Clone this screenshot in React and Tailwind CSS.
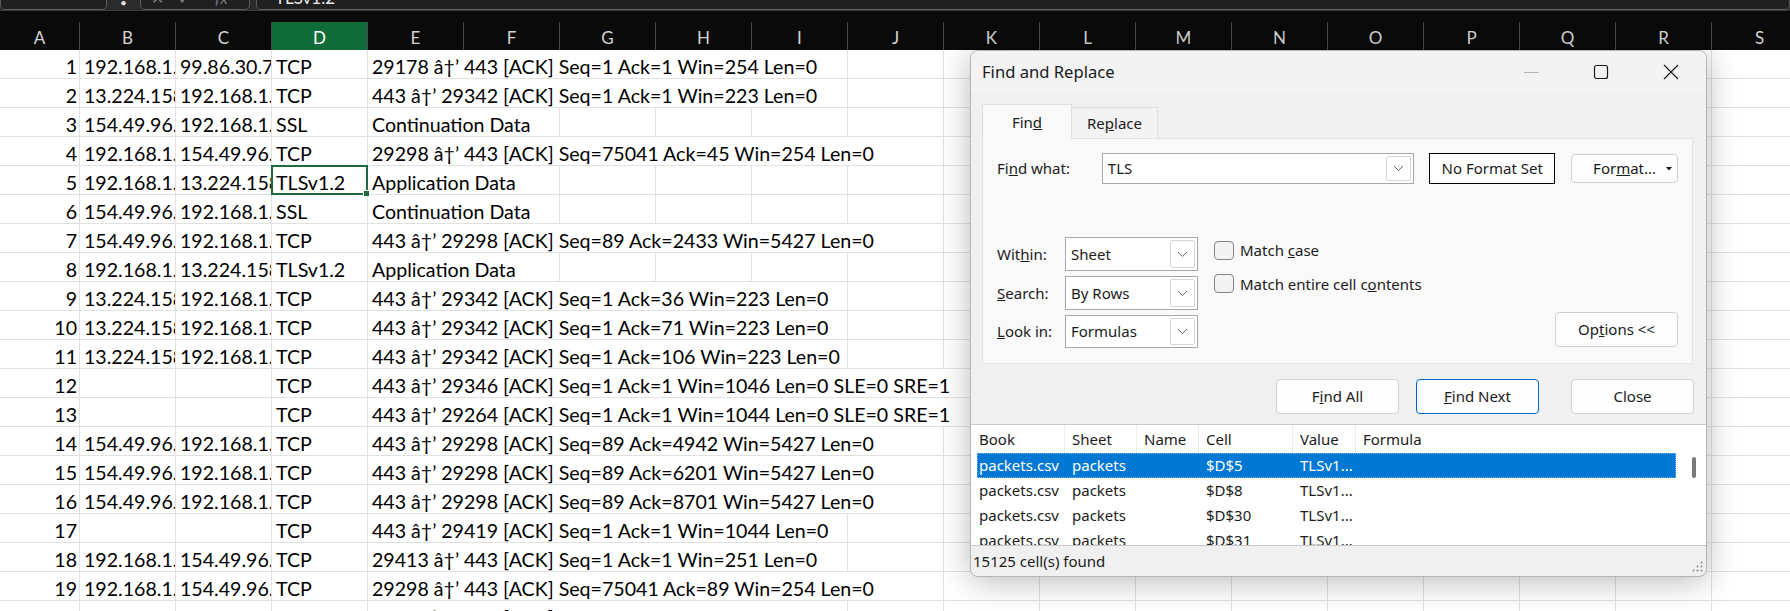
import clsx from 'clsx';

const COLS = ['A', 'B', 'C', 'D', 'E', 'F', 'G', 'H', 'I', 'J', 'K', 'L', 'M', 'N', 'O', 'P', 'Q', 'R', 'S', 'T'];

const ROWS = [
  ['1', '192.168.1.', '99.86.30.7', 'TCP', '29178 â†’ 443 [ACK] Seq=1 Ack=1 Win=254 Len=0', 5],
  ['2', '13.224.158', '192.168.1.', 'TCP', '443 â†’ 29342 [ACK] Seq=1 Ack=1 Win=223 Len=0', 5],
  ['3', '154.49.96.', '192.168.1.', 'SSL', 'Continuation Data', 2],
  ['4', '192.168.1.', '154.49.96.', 'TCP', '29298 â†’ 443 [ACK] Seq=75041 Ack=45 Win=254 Len=0', 6],
  ['5', '192.168.1.', '13.224.158', 'TLSv1.2', 'Application Data', 2],
  ['6', '154.49.96.', '192.168.1.', 'SSL', 'Continuation Data', 2],
  ['7', '154.49.96.', '192.168.1.', 'TCP', '443 â†’ 29298 [ACK] Seq=89 Ack=2433 Win=5427 Len=0', 6],
  ['8', '192.168.1.', '13.224.158', 'TLSv1.2', 'Application Data', 2],
  ['9', '13.224.158', '192.168.1.', 'TCP', '443 â†’ 29342 [ACK] Seq=1 Ack=36 Win=223 Len=0', 5],
  ['10', '13.224.158', '192.168.1.', 'TCP', '443 â†’ 29342 [ACK] Seq=1 Ack=71 Win=223 Len=0', 5],
  ['11', '13.224.158', '192.168.1.', 'TCP', '443 â†’ 29342 [ACK] Seq=1 Ack=106 Win=223 Len=0', 5],
  ['12', '', '', 'TCP', '443 â†’ 29346 [ACK] Seq=1 Ack=1 Win=1046 Len=0 SLE=0 SRE=1', 7],
  ['13', '', '', 'TCP', '443 â†’ 29264 [ACK] Seq=1 Ack=1 Win=1044 Len=0 SLE=0 SRE=1', 7],
  ['14', '154.49.96.', '192.168.1.', 'TCP', '443 â†’ 29298 [ACK] Seq=89 Ack=4942 Win=5427 Len=0', 6],
  ['15', '154.49.96.', '192.168.1.', 'TCP', '443 â†’ 29298 [ACK] Seq=89 Ack=6201 Win=5427 Len=0', 6],
  ['16', '154.49.96.', '192.168.1.', 'TCP', '443 â†’ 29298 [ACK] Seq=89 Ack=8701 Win=5427 Len=0', 6],
  ['17', '', '', 'TCP', '443 â†’ 29419 [ACK] Seq=1 Ack=1 Win=1044 Len=0', 5],
  ['18', '192.168.1.', '154.49.96.', 'TCP', '29413 â†’ 443 [ACK] Seq=1 Ack=1 Win=251 Len=0', 5],
  ['19', '192.168.1.', '154.49.96.', 'TCP', '29298 â†’ 443 [ACK] Seq=75041 Ack=89 Win=254 Len=0', 6],
  ['20', '13.224.158', '192.168.1.', 'TCP', '443 â†’ 29342 [ACK] Seq=1 Ack=141 Win=223 Len=0', 5],
];

const SPAN_W = { 2: 'w-[192px]', 5: 'w-[480px]', 6: 'w-[576px]', 7: 'w-[672px]' };

const RESULTS = [
  ['packets.csv', 'packets', '$D$5', 'TLSv1...'],
  ['packets.csv', 'packets', '$D$8', 'TLSv1...'],
  ['packets.csv', 'packets', '$D$30', 'TLSv1...'],
  ['packets.csv', 'packets', '$D$31', 'TLSv1...'],
];

const cellBase = 'flex h-full shrink-0 items-end overflow-hidden whitespace-nowrap border-r border-[#e1e1e1] leading-[23px]';

function Chevron() {
  return (
    <svg width="11" height="7" viewBox="0 0 11 7" fill="none">
      <polyline points="1,1 5.5,5.5 10,1" stroke="#6a6a6a" strokeWidth="1" />
    </svg>
  );
}

function Combo({ value, className }) {
  return (
    <div className={clsx('flex items-center border border-[#a8a8a8] bg-white p-[2px]', className)}>
      <span className="flex-1 pl-[3px]">{value}</span>
      <div className="flex h-full w-[25px] items-center justify-center rounded-[2px] border border-[#d6d6d6] bg-white">
        <Chevron />
      </div>
    </div>
  );
}

function Btn({ children, className }) {
  return (
    <div className={clsx('flex h-[35px] w-[123px] items-center justify-center rounded-[4px] border bg-[#fdfdfd]', className)}>
      {children}
    </div>
  );
}

function Checkbox({ label }) {
  return (
    <div className="flex items-center gap-[6px]">
      <div className="h-[19px] w-[20px] rounded-[4px] border border-[#858585] bg-[#f3f3f3]" />
      <span>{label}</span>
    </div>
  );
}

function Sheet() {
  return (
    <div className="font-['Lato',sans-serif]">
      {/* top strip with name box / formula bar, mostly scrolled off */}
      <div className="flex h-[11px] items-end overflow-hidden border-b border-[#3c3c3c] bg-[#2b2b2b]">
        <div className="h-[30px] w-[107px] shrink-0 rounded-[5px] border border-[#5c5c5c] bg-[#202020]" />
        <div className="flex w-[33px] shrink-0 justify-center self-start text-[12px] leading-[6px] text-[#e0e0e0]">•</div>
        <div className="flex h-[30px] w-[110px] shrink-0 items-end gap-[14px] rounded-[5px] border border-[#5c5c5c] bg-[#202020] pb-[3px] pl-[10px] text-[16px] leading-[16px] text-[#7a7a7a]">
          <span>✕</span>
          <span>✓</span>
          <span className="ml-[10px] italic">fx</span>
        </div>
        <div className="ml-[6px] flex h-[30px] flex-1 items-end rounded-[5px] border border-[#5c5c5c] bg-[#202020] pb-[3px] pl-[18px] text-[17px] leading-[16px] text-[#e8e8e8]">
          TLSv1.2
        </div>
      </div>

      {/* column headers */}
      <div className="flex h-[39px] items-end bg-[#0a0a0a]">
        {COLS.map((c, i) => (
          <div
            key={c}
            className={clsx(
              'flex h-[28px] shrink-0 items-center justify-center border-r border-[#4a4a4a] pt-[3px] text-[17px]',
              i === 0 ? 'w-[80px]' : 'w-[96px]',
              c === 'D' ? 'bg-[#0f6b38] text-white' : 'text-[#d4d4d4]'
            )}
          >
            {c}
          </div>
        ))}
      </div>

      {/* rows */}
      <div className="text-[19.6px] text-black">
        {ROWS.map(([a, b, c, d, e, span]) => (
          <div key={a} className="flex h-[29px] border-b border-[#e1e1e1]">
            <div className={clsx(cellBase, 'w-[80px] justify-end pr-[2px]')}>{a}</div>
            <div className={clsx(cellBase, 'w-[96px] pl-[4px]')}>{b}</div>
            <div className={clsx(cellBase, 'w-[96px] pl-[4px]')}>{c}</div>
            <div className={clsx(cellBase, 'relative w-[96px] overflow-visible pl-[4px]')}>
              {d}
              {a === '5' && (
                <div className="absolute -bottom-px -left-px -right-px -top-px z-10 border-2 border-[#1e6b3f]">
                  <div className="absolute -bottom-[4px] -right-[4px] h-[7px] w-[7px] border border-white bg-[#1e6b3f]" />
                </div>
              )}
            </div>
            <div className={clsx(cellBase, SPAN_W[span], 'pl-[4px]')}>{e}</div>
            {Array.from({ length: 16 - span }).map((_, i) => (
              <div key={i} className={clsx(cellBase, 'w-[96px]')} />
            ))}
          </div>
        ))}
      </div>
    </div>
  );
}

function FindDialog() {
  return (
    <div className="absolute left-[970px] top-[50px] flex h-[527px] w-[737px] flex-col overflow-hidden rounded-[8px] border border-[#b4b4b4] bg-[#f0f0f0] font-['Noto_Sans',sans-serif] text-[15px] text-[#1b1b1b] shadow-[0_4px_32px_rgba(0,0,0,0.28)]">
      {/* title bar */}
      <div className="flex h-[42px] shrink-0 items-center justify-between bg-[#f3f3f3] pl-[11px]">
        <span className="text-[16.6px]">Find and Replace</span>
        <div className="flex h-full">
          <div className="flex w-[70px] items-center justify-center">
            <div className="h-px w-[15px] bg-[#b5b5b5]" />
          </div>
          <div className="flex w-[70px] items-center justify-center">
            <svg width="16" height="16" viewBox="0 0 16 16" fill="none">
              <rect x="1.5" y="1.5" width="13" height="13" rx="2" stroke="#1a1a1a" strokeWidth="1.2" />
            </svg>
          </div>
          <div className="flex w-[70px] items-center justify-center">
            <svg width="16" height="16" viewBox="0 0 16 16" fill="none">
              <path d="M1 1 L15 15 M15 1 L1 15" stroke="#1a1a1a" strokeWidth="1.2" />
            </svg>
          </div>
        </div>
      </div>

      {/* tabs */}
      <div className="flex h-[45px] shrink-0 items-end pl-[11px] pt-[11px]">
        <div className="relative z-10 -mb-px flex h-[35px] w-[90px] items-center justify-center border border-b-0 border-[#e0e0e0] bg-[#f9f9f9]">
          <span>Fin<span className="underline">d</span></span>
        </div>
        <div className="flex h-[31px] w-[86px] items-center justify-center border border-b-0 border-l-0 border-[#e0e0e0] bg-[#f3f3f3]">
          <span>Re<span className="underline">p</span>lace</span>
        </div>
      </div>

      {/* options panel */}
      <div className="ml-[11px] flex h-[226px] w-[711px] shrink-0 flex-col border border-[#e3e3e3] bg-[#f9f9f9] px-[14px]">
        <div className="mt-[14px] flex h-[31px] items-center">
          <span className="w-[105px]">Fi<span className="underline">n</span>d what:</span>
          <Combo value="TLS" className="h-[31px] w-[313px]" />
          <div className="ml-[15px] flex h-[31px] w-[126px] items-center justify-center border border-black bg-white">
            No Format Set
          </div>
          <div className="relative ml-[16px] flex h-[29px] w-[107px] items-center justify-center rounded-[4px] border border-[#d0d0d0] bg-[#fdfdfd]">
            <span>For<span className="underline">m</span>at...</span>
            <svg className="absolute right-[5px] top-[12px]" width="6" height="4" viewBox="0 0 6 4">
              <polygon points="0,0 6,0 3,3.5" fill="#1a1a1a" />
            </svg>
          </div>
        </div>

        <div className="mt-[53px] flex">
          <div className="flex flex-col gap-[5px]">
            <div className="flex items-center">
              <span className="w-[68px]">Wit<span className="underline">h</span>in:</span>
              <Combo value="Sheet" className="h-[34px] w-[133px]" />
            </div>
            <div className="flex items-center">
              <span className="w-[68px]"><span className="underline">S</span>earch:</span>
              <Combo value="By Rows" className="h-[34px] w-[133px]" />
            </div>
            <div className="flex items-center">
              <span className="w-[68px]"><span className="underline">L</span>ook in:</span>
              <Combo value="Formulas" className="h-[33px] w-[133px]" />
            </div>
          </div>
          <div className="ml-[16px] mt-[2px] flex flex-col gap-[11px]">
            <Checkbox label={<>Match <span className="underline">c</span>ase</>} />
            <Checkbox label={<>Match entire cell c<span className="underline">o</span>ntents</>} />
          </div>
          <div className="flex flex-1 items-end justify-end pb-[1px]">
            <Btn className="border-[#d0d0d0]">
              <span>Op<span className="underline">t</span>ions &lt;&lt;</span>
            </Btn>
          </div>
        </div>
      </div>

      {/* action buttons */}
      <div className="mt-[15px] flex shrink-0 justify-end pr-[12px]">
        <Btn className="border-[#d0d0d0]">
          <span>F<span className="underline">i</span>nd All</span>
        </Btn>
        <Btn className="ml-[17px] border-[#0067c0]">
          <span><span className="underline">F</span>ind Next</span>
        </Btn>
        <Btn className="ml-[32px] border-[#d0d0d0]">Close</Btn>
      </div>

      {/* results list */}
      <div className="mt-[10px] flex h-[122px] shrink-0 border-y border-[#c8c8c8] bg-white">
        <div className="flex w-[707px] flex-col overflow-hidden">
          <div className="flex h-[28px] shrink-0 items-center">
            <div className="flex h-full w-[94px] items-center border-r border-[#ececec] pl-[8px]">Book</div>
            <div className="flex h-full w-[72px] items-center border-r border-[#ececec] pl-[7px]">Sheet</div>
            <div className="flex h-full w-[62px] items-center border-r border-[#ececec] pl-[7px]">Name</div>
            <div className="flex h-full w-[94px] items-center border-r border-[#ececec] pl-[7px]">Cell</div>
            <div className="flex h-full w-[63px] items-center border-r border-[#ececec] pl-[7px]">Value</div>
            <div className="flex h-full flex-1 items-center pl-[7px]">Formula</div>
          </div>
          {RESULTS.map((r, i) => (
            <div
              key={r[2]}
              className={clsx(
                'ml-[6px] flex h-[25px] w-[699px] shrink-0 items-center',
                i === 0 ? 'bg-[#0078d4] text-white outline-1 -outline-offset-1 outline-dotted outline-[#7fb8ea]' : ''
              )}
            >
              <span className="w-[88px] pl-[2px]">{r[0]}</span>
              <span className="w-[72px] pl-[7px]">{r[1]}</span>
              <span className="w-[62px]" />
              <span className="w-[94px] pl-[7px]">{r[2]}</span>
              <span className="w-[63px] pl-[7px]">{r[3]}</span>
            </div>
          ))}
        </div>
        <div className="flex flex-1 justify-center pt-[32px] pl-[3px]">
          <div className="h-[21px] w-[4px] rounded-full bg-[#7a7a7a]" />
        </div>
      </div>

      {/* status */}
      <div className="flex flex-1 items-center justify-between pl-[2px] pr-[3px]">
        <span>15125 cell(s) found</span>
        <svg className="mt-[10px]" width="11" height="11" viewBox="0 0 11 11">
          <circle cx="9.5" cy="1.5" r="1" fill="#8a8a8a" />
          <circle cx="9.5" cy="5.5" r="1" fill="#8a8a8a" />
          <circle cx="5.5" cy="5.5" r="1" fill="#8a8a8a" />
          <circle cx="9.5" cy="9.5" r="1" fill="#8a8a8a" />
          <circle cx="5.5" cy="9.5" r="1" fill="#8a8a8a" />
          <circle cx="1.5" cy="9.5" r="1" fill="#8a8a8a" />
        </svg>
      </div>
    </div>
  );
}

export default function App() {
  return (
    <div className="relative h-[611px] w-[1790px] overflow-hidden bg-white">
      <Sheet />
      <FindDialog />
    </div>
  );
}
